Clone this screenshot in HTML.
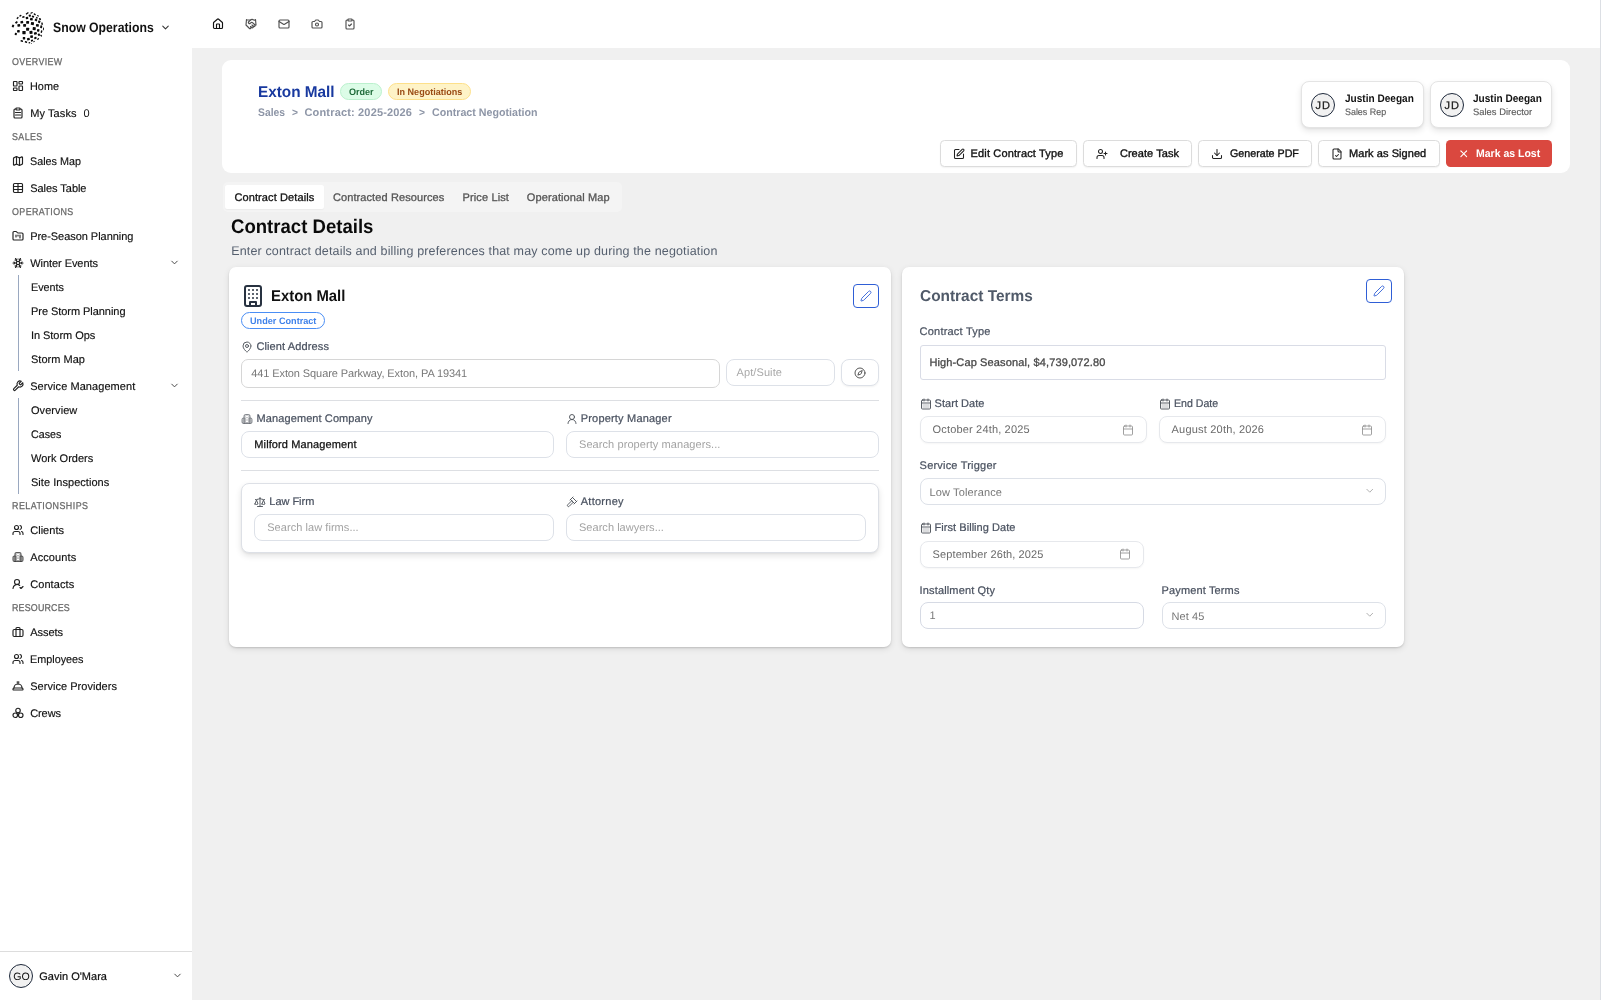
<!DOCTYPE html>
<html lang="en"><head><meta charset="utf-8"><title>Exton Mall - Contract Negotiation</title><style>
*{box-sizing:border-box;margin:0;padding:0}
html,body{width:1601px;height:1000px;overflow:hidden}
body{position:relative;background:#f0f0f0;text-rendering:geometricPrecision;font-family:"Liberation Sans",sans-serif;color:#111}
.t{position:absolute;white-space:nowrap;line-height:1}
#root{position:absolute;left:0;top:0;width:1601px;height:1000px;will-change:transform}
.b{position:absolute}
.i{position:absolute;fill:none;stroke:currentColor;stroke-linecap:round;stroke-linejoin:round;overflow:visible}
</style></head><body><div id="root">
<div class="b" style="left:0.00px;top:0.00px;width:1601.00px;height:48.00px;background:#fff"></div>
<div class="b" style="left:0.00px;top:0.00px;width:192.00px;height:1000.00px;background:#fff"></div>
<div class="b" style="left:1600.00px;top:0.00px;width:1.00px;height:1000.00px;background:#dcdfe4"></div>
<svg class="i" style="left:12px;top:12px;width:32px;height:32px" viewBox="0 0 32 32"><g fill="#0a0a0a" stroke="none"><rect x="13.70" y="0.70" width="3.00" height="1.40" rx="0.4" transform="rotate(-35 15.20 1.40)"/><rect x="18.40" y="0.24" width="2.40" height="1.28" rx="0.4" transform="rotate(-25 19.60 0.88)"/><rect x="21.62" y="1.62" width="2.20" height="1.40" rx="0.4" transform="rotate(40 22.72 2.32)"/><rect x="25.10" y="3.24" width="1.80" height="1.12" rx="0.4" transform="rotate(40 26.00 3.80)"/><rect x="7.30" y="3.10" width="2.20" height="1.40" rx="0.4" transform="rotate(-30 8.40 3.80)"/><rect x="4.50" y="5.30" width="2.20" height="1.40" rx="0.4" transform="rotate(-45 5.60 6.00)"/><rect x="10.20" y="4.16" width="2.40" height="1.68" rx="0.4" transform="rotate(-20 11.40 5.00)"/><rect x="13.76" y="4.90" width="2.48" height="2.20" rx="0.4" transform="rotate(-8 15.00 6.00)"/><rect x="16.70" y="2.60" width="2.20" height="2.00" rx="0.4" transform="rotate(-15 17.80 3.60)"/><rect x="19.90" y="3.60" width="2.20" height="2.00" rx="0.4" transform="rotate(20 21.00 4.60)"/><rect x="18.04" y="6.04" width="2.72" height="2.32" rx="0.4" transform="rotate(12 19.40 7.20)"/><rect x="22.80" y="6.90" width="2.40" height="2.20" rx="0.4" transform="rotate(30 24.00 8.00)"/><rect x="24.04" y="5.00" width="1.68" height="1.60" rx="0.4" transform="rotate(35 24.88 5.80)"/><rect x="27.20" y="6.02" width="1.60" height="2.20" rx="0.4" transform="rotate(-30 28.00 7.12)"/><rect x="3.16" y="9.50" width="2.48" height="1.80" rx="0.4" transform="rotate(-40 4.40 10.40)"/><rect x="8.44" y="9.00" width="2.72" height="2.40" rx="0.4" transform="rotate(-10 9.80 10.20)"/><rect x="14.16" y="9.04" width="2.88" height="2.72" rx="0.4" transform="rotate(0 15.60 10.40)"/><rect x="18.88" y="10.20" width="3.04" height="2.80" rx="0.4" transform="rotate(8 20.40 11.60)"/><rect x="26.10" y="8.60" width="2.20" height="2.40" rx="0.4" transform="rotate(25 27.20 9.80)"/><rect x="29.36" y="10.44" width="1.44" height="2.48" rx="0.4" transform="rotate(-8 30.08 11.68)"/><rect x="0.00" y="12.76" width="2.00" height="2.48" rx="0.4" transform="rotate(25 1.00 14.00)"/><rect x="5.44" y="12.16" width="2.72" height="2.48" rx="0.4" transform="rotate(-8 6.80 13.40)"/><rect x="11.16" y="12.04" width="2.88" height="2.72" rx="0.4" transform="rotate(0 12.60 13.40)"/><rect x="24.00" y="12.08" width="2.80" height="2.64" rx="0.4" transform="rotate(10 25.40 13.40)"/><rect x="28.24" y="13.40" width="1.92" height="2.80" rx="0.4" transform="rotate(8 29.20 14.80)"/><rect x="31.00" y="15.48" width="0.88" height="2.80" rx="0.4" transform="rotate(5 31.44 16.88)"/><rect x="14.08" y="15.76" width="3.04" height="2.88" rx="0.4" transform="rotate(0 15.60 17.20)"/><rect x="20.68" y="15.12" width="3.04" height="2.96" rx="0.4" transform="rotate(5 22.20 16.60)"/><rect x="25.04" y="17.08" width="2.32" height="2.64" rx="0.4" transform="rotate(12 26.20 18.40)"/><rect x="28.80" y="18.36" width="1.44" height="2.48" rx="0.4" transform="rotate(15 29.52 19.60)"/><rect x="5.08" y="18.00" width="2.64" height="2.40" rx="0.4" transform="rotate(0 6.40 19.20)"/><rect x="2.76" y="20.96" width="2.08" height="2.08" rx="0.4" transform="rotate(10 3.80 22.00)"/><rect x="10.36" y="19.04" width="3.28" height="3.12" rx="0.4" transform="rotate(0 12.00 20.60)"/><rect x="17.48" y="18.96" width="3.04" height="2.88" rx="0.4" transform="rotate(-5 19.00 20.40)"/><rect x="22.00" y="20.16" width="2.80" height="2.48" rx="0.4" transform="rotate(-15 23.40 21.40)"/><rect x="25.88" y="21.60" width="2.00" height="2.24" rx="0.4" transform="rotate(-30 26.88 22.72)"/><rect x="28.60" y="22.72" width="1.20" height="1.92" rx="0.4" transform="rotate(-40 29.20 23.68)"/><rect x="18.28" y="23.36" width="2.64" height="2.48" rx="0.4" transform="rotate(-10 19.60 24.60)"/><rect x="22.16" y="25.04" width="2.48" height="1.92" rx="0.4" transform="rotate(-25 23.40 26.00)"/><rect x="25.08" y="26.36" width="2.00" height="1.28" rx="0.4" transform="rotate(-40 26.08 27.00)"/><rect x="10.80" y="24.96" width="2.40" height="2.48" rx="0.4" transform="rotate(0 12.00 26.20)"/><rect x="8.56" y="28.16" width="2.48" height="1.68" rx="0.4" transform="rotate(15 9.80 29.00)"/><rect x="15.04" y="26.04" width="2.72" height="2.32" rx="0.4" transform="rotate(-15 16.40 27.20)"/><rect x="12.84" y="29.20" width="2.32" height="1.60" rx="0.4" transform="rotate(20 14.00 30.00)"/><rect x="18.96" y="27.76" width="2.08" height="1.68" rx="0.4" transform="rotate(-25 20.00 28.60)"/><rect x="16.56" y="30.16" width="1.68" height="1.28" rx="0.4" transform="rotate(-20 17.40 30.80)"/><rect x="21.20" y="29.08" width="1.60" height="1.04" rx="0.4" transform="rotate(-35 22.00 29.60)"/><rect x="18.92" y="30.96" width="0.96" height="0.88" rx="0.4" transform="rotate(0 19.40 31.40)"/></g></svg>
<span class="t" style="left:53.40px;top:21.00px;font-size:13.7px;font-weight:700;transform-origin:0 50%;transform:scaleX(0.8946);">Snow Operations</span>
<svg class="i" style="left:159.50px;top:22.00px;width:11px;height:11px;color:#333;" viewBox="0 0 24 24" stroke-width="2.3"><path d="m6 9 6 6 6-6"/></svg>
<svg class="i" style="left:212.00px;top:17.50px;width:12px;height:12px;color:#111;" viewBox="0 0 24 24" stroke-width="2.3"><path d="M15 21v-8a1 1 0 0 0-1-1h-4a1 1 0 0 0-1 1v8"/><path d="M3 10a2 2 0 0 1 .709-1.528l7-5.999a2 2 0 0 1 2.582 0l7 5.999A2 2 0 0 1 21 10v9a2 2 0 0 1-2 2H5a2 2 0 0 1-2-2z"/></svg>
<svg class="i" style="left:245.00px;top:17.50px;width:12px;height:12px;color:#505050;" viewBox="0 0 24 24" stroke-width="2.3"><path d="m11 17 2 2a1 1 0 1 0 3-3"/><path d="m14 14 2.5 2.5a1 1 0 1 0 3-3l-3.88-3.88a3 3 0 0 0-4.24 0l-.88.88a1 1 0 1 1-3-3l2.81-2.81a5.79 5.79 0 0 1 7.06-.87l.47.28a2 2 0 0 0 1.42.25L21 4"/><path d="m21 3 1 11h-2"/><path d="M3 3 2 14l6.5 6.5a1 1 0 1 0 3-3"/><path d="M3 4h8"/></svg>
<svg class="i" style="left:278.00px;top:17.50px;width:12px;height:12px;color:#505050;" viewBox="0 0 24 24" stroke-width="2.3"><rect width="20" height="16" x="2" y="4" rx="2"/><path d="m22 7-8.97 5.7a1.94 1.94 0 0 1-2.06 0L2 7"/></svg>
<svg class="i" style="left:311.00px;top:17.50px;width:12px;height:12px;color:#505050;" viewBox="0 0 24 24" stroke-width="2.3"><path d="M14.5 4h-5L7 7H4a2 2 0 0 0-2 2v9a2 2 0 0 0 2 2h16a2 2 0 0 0 2-2V9a2 2 0 0 0-2-2h-3l-2.5-3z"/><circle cx="12" cy="13" r="3"/></svg>
<svg class="i" style="left:344.00px;top:17.50px;width:12px;height:12px;color:#505050;" viewBox="0 0 24 24" stroke-width="2.3"><rect width="8" height="4" x="8" y="2" rx="1" ry="1"/><path d="M16 4h2a2 2 0 0 1 2 2v14a2 2 0 0 1-2 2H6a2 2 0 0 1-2-2V6a2 2 0 0 1 2-2h2"/><path d="m9 14 2 2 4-4"/></svg>
<span class="t" style="left:12.00px;top:58.40px;font-size:9.9px;color:#666;transform-origin:0 50%;transform:scaleX(0.9);letter-spacing:0.390px;-webkit-text-stroke:0.25px;">OVERVIEW</span>
<svg class="i" style="left:12.00px;top:80.00px;width:12px;height:12px;color:#222;" viewBox="0 0 24 24" stroke-width="2.3"><rect width="7" height="9" x="3" y="3" rx="1"/><rect width="7" height="5" x="14" y="3" rx="1"/><rect width="7" height="9" x="14" y="12" rx="1"/><rect width="7" height="5" x="3" y="16" rx="1"/></svg>
<span class="t" style="left:30.20px;top:81.90px;font-size:11px;transform-origin:0 50%;transform:scaleX(0.9883);-webkit-text-stroke:0.15px;">Home</span>
<svg class="i" style="left:12.00px;top:107.00px;width:12px;height:12px;color:#222;" viewBox="0 0 24 24" stroke-width="2.3"><rect width="8" height="4" x="8" y="2" rx="1" ry="1"/><path d="M16 4h2a2 2 0 0 1 2 2v14a2 2 0 0 1-2 2H6a2 2 0 0 1-2-2V6a2 2 0 0 1 2-2h2"/><path d="M7 11h10"/><path d="M7 16h10"/></svg>
<span class="t" style="left:30.20px;top:108.90px;font-size:11px;letter-spacing:0.094px;-webkit-text-stroke:0.15px;">My Tasks</span>
<span class="t" style="left:83.50px;top:108.90px;font-size:11px;">0</span>
<span class="t" style="left:12.00px;top:133.40px;font-size:9.9px;color:#666;transform-origin:0 50%;transform:scaleX(0.9);letter-spacing:0.428px;-webkit-text-stroke:0.25px;">SALES</span>
<svg class="i" style="left:12.00px;top:155.00px;width:12px;height:12px;color:#222;" viewBox="0 0 24 24" stroke-width="2.3"><path d="M14.106 5.553a2 2 0 0 0 1.788 0l3.659-1.83A1 1 0 0 1 21 4.619v12.764a1 1 0 0 1-.553.894l-4.553 2.277a2 2 0 0 1-1.788 0l-4.212-2.106a2 2 0 0 0-1.788 0l-3.659 1.83A1 1 0 0 1 3 19.381V6.618a1 1 0 0 1 .553-.894l4.553-2.277a2 2 0 0 1 1.788 0z"/><path d="M15 5.764v15"/><path d="M9 3.236v15"/></svg>
<span class="t" style="left:30.20px;top:156.90px;font-size:11px;transform-origin:0 50%;transform:scaleX(0.9811);-webkit-text-stroke:0.15px;">Sales Map</span>
<svg class="i" style="left:12.00px;top:182.00px;width:12px;height:12px;color:#222;" viewBox="0 0 24 24" stroke-width="2.3"><path d="M12 3v18"/><rect width="18" height="18" x="3" y="3" rx="2"/><path d="M3 9h18"/><path d="M3 15h18"/></svg>
<span class="t" style="left:30.20px;top:183.90px;font-size:11px;letter-spacing:-0.037px;-webkit-text-stroke:0.15px;">Sales Table</span>
<span class="t" style="left:12.00px;top:208.40px;font-size:9.9px;color:#666;transform-origin:0 50%;transform:scaleX(0.9);letter-spacing:0.443px;-webkit-text-stroke:0.25px;">OPERATIONS</span>
<svg class="i" style="left:12.00px;top:230.00px;width:12px;height:12px;color:#222;" viewBox="0 0 24 24" stroke-width="2.3"><path d="M4 20h16a2 2 0 0 0 2-2V8a2 2 0 0 0-2-2h-7.930a2 2 0 0 1-1.660-.900l-.820-1.200A2 2 0 0 0 7.930 3H4a2 2 0 0 0-2 2v13c0 1.100.900 2 2 2Z"/><path d="M8 10v4"/><path d="M12 10v2"/><path d="M16 10v6"/></svg>
<span class="t" style="left:30.20px;top:231.90px;font-size:11px;letter-spacing:-0.043px;-webkit-text-stroke:0.15px;">Pre-Season Planning</span>
<svg class="i" style="left:12.00px;top:257.00px;width:12px;height:12px;color:#222;" viewBox="0 0 24 24" stroke-width="2.3"><path d="m10 20-1.25-2.5L6 18"/><path d="M10 4 8.75 6.5 6 6"/><path d="m14 20 1.25-2.5L18 18"/><path d="m14 4 1.25 2.5L18 6"/><path d="m17 21-3-6h-4"/><path d="m17 3-3 6 1.500 3"/><path d="M2 12h6.500L10 9"/><path d="m20 10-1.500 2 1.500 2"/><path d="M22 12h-6.500L14 15"/><path d="m4 10 1.500 2L4 14"/><path d="m7 21 3-6-1.500-3"/><path d="m7 3 3 6h4"/></svg>
<span class="t" style="left:30.20px;top:258.90px;font-size:11px;letter-spacing:-0.056px;-webkit-text-stroke:0.15px;">Winter Events</span>
<svg class="i" style="left:168.50px;top:257.10px;width:11px;height:11px;color:#444;" viewBox="0 0 24 24" stroke-width="2.1"><path d="m6 9 6 6 6-6"/></svg>
<span class="t" style="left:31.00px;top:282.90px;font-size:11px;transform-origin:0 50%;transform:scaleX(0.9810);-webkit-text-stroke:0.15px;">Events</span>
<span class="t" style="left:31.00px;top:306.90px;font-size:11px;letter-spacing:-0.052px;-webkit-text-stroke:0.15px;">Pre Storm Planning</span>
<span class="t" style="left:31.00px;top:330.90px;font-size:11px;letter-spacing:-0.054px;-webkit-text-stroke:0.15px;">In Storm Ops</span>
<span class="t" style="left:31.00px;top:354.90px;font-size:11px;letter-spacing:0.025px;-webkit-text-stroke:0.15px;">Storm Map</span>
<svg class="i" style="left:12.00px;top:380.00px;width:12px;height:12px;color:#222;" viewBox="0 0 24 24" stroke-width="2.3"><path d="M14.7 6.3a1 1 0 0 0 0 1.400l1.600 1.600a1 1 0 0 0 1.400 0l3.770-3.770a6 6 0 0 1-7.940 7.940l-6.910 6.910a2.120 2.120 0 0 1-3-3l6.910-6.910a6 6 0 0 1 7.940-7.940l-3.760 3.760z"/></svg>
<span class="t" style="left:30.20px;top:381.90px;font-size:11px;letter-spacing:0.067px;-webkit-text-stroke:0.15px;">Service Management</span>
<svg class="i" style="left:168.50px;top:380.30px;width:11px;height:11px;color:#444;" viewBox="0 0 24 24" stroke-width="2.1"><path d="m6 9 6 6 6-6"/></svg>
<span class="t" style="left:31.00px;top:405.90px;font-size:11px;letter-spacing:0.065px;-webkit-text-stroke:0.15px;">Overview</span>
<span class="t" style="left:31.00px;top:429.90px;font-size:11px;transform-origin:0 50%;transform:scaleX(0.9715);-webkit-text-stroke:0.15px;">Cases</span>
<span class="t" style="left:31.00px;top:453.90px;font-size:11px;letter-spacing:0.016px;-webkit-text-stroke:0.15px;">Work Orders</span>
<span class="t" style="left:31.00px;top:477.90px;font-size:11px;letter-spacing:0.036px;-webkit-text-stroke:0.15px;">Site Inspections</span>
<div class="b" style="left:18.00px;top:275.00px;width:1.00px;height:96.00px;background:#9aa8c0"></div>
<div class="b" style="left:18.00px;top:398.00px;width:1.00px;height:96.00px;background:#9aa8c0"></div>
<span class="t" style="left:12.00px;top:502.40px;font-size:9.9px;color:#666;transform-origin:0 50%;transform:scaleX(0.9);letter-spacing:0.512px;-webkit-text-stroke:0.25px;">RELATIONSHIPS</span>
<svg class="i" style="left:12.00px;top:524.00px;width:12px;height:12px;color:#222;" viewBox="0 0 24 24" stroke-width="2.3"><path d="M16 21v-2a4 4 0 0 0-4-4H6a4 4 0 0 0-4 4v2"/><circle cx="9" cy="7" r="4"/><path d="M22 21v-2a4 4 0 0 0-3-3.870"/><path d="M16 3.130a4 4 0 0 1 0 7.750"/></svg>
<span class="t" style="left:30.20px;top:525.90px;font-size:11px;letter-spacing:0.029px;-webkit-text-stroke:0.15px;">Clients</span>
<svg class="i" style="left:12.00px;top:551.00px;width:12px;height:12px;color:#222;" viewBox="0 0 24 24" stroke-width="2.3"><g stroke-opacity=".7"><path d="M6 21V6a3 3 0 0 1 3-3h6a3 3 0 0 1 3 3v15" fill="currentColor" fill-opacity=".25"/><path d="M6 10H5a3 3 0 0 0-3 3v5a3 3 0 0 0 3 3h14a3 3 0 0 0 3-3v-5a3 3 0 0 0-3-3h-1" fill="currentColor" fill-opacity=".25"/></g><rect x="9.800" y="6" width="4.400" height="12" fill="#fff" stroke="none"/><path d="M12 9.500v.010"/><path d="M12 14v.010"/></svg>
<span class="t" style="left:30.20px;top:552.90px;font-size:11px;letter-spacing:0.107px;-webkit-text-stroke:0.15px;">Accounts</span>
<svg class="i" style="left:12.00px;top:578.00px;width:12px;height:12px;color:#222;" viewBox="0 0 24 24" stroke-width="2.3"><path d="M2 21a8 8 0 0 1 13.292-6"/><circle cx="10" cy="8" r="5"/><path d="m16 19 2 2 4-4"/></svg>
<span class="t" style="left:30.20px;top:579.90px;font-size:11px;letter-spacing:0.083px;-webkit-text-stroke:0.15px;">Contacts</span>
<span class="t" style="left:12.00px;top:604.40px;font-size:9.9px;color:#666;transform-origin:0 50%;transform:scaleX(0.9);letter-spacing:0.194px;-webkit-text-stroke:0.25px;">RESOURCES</span>
<svg class="i" style="left:12.00px;top:626.00px;width:12px;height:12px;color:#222;" viewBox="0 0 24 24" stroke-width="2.3"><rect x="2" y="7" width="20" height="14" rx="2.500"/><path d="M8 7V5a2 2 0 0 1 2-2h4a2 2 0 0 1 2 2v2"/><path d="M8 7v14"/><path d="M16 7v14"/></svg>
<span class="t" style="left:30.20px;top:627.90px;font-size:11px;letter-spacing:-0.043px;-webkit-text-stroke:0.15px;">Assets</span>
<svg class="i" style="left:12.00px;top:653.00px;width:12px;height:12px;color:#222;" viewBox="0 0 24 24" stroke-width="2.3"><path d="M16 21v-2a4 4 0 0 0-4-4H6a4 4 0 0 0-4 4v2"/><circle cx="9" cy="7" r="4"/><path d="M22 21v-2a4 4 0 0 0-3-3.870"/><path d="M16 3.130a4 4 0 0 1 0 7.750"/></svg>
<span class="t" style="left:30.20px;top:654.90px;font-size:11px;transform-origin:0 50%;transform:scaleX(0.9831);-webkit-text-stroke:0.15px;">Employees</span>
<svg class="i" style="left:12.00px;top:680.00px;width:12px;height:12px;color:#222;" viewBox="0 0 24 24" stroke-width="2.3"><path d="M3 20a1 1 0 0 1-1-1v-1a2 2 0 0 1 2-2h16a2 2 0 0 1 2 2v1a1 1 0 0 1-1 1Z"/><path d="M20 16a8 8 0 1 0-16 0"/><path d="M12 4v4"/><path d="M10 4h4"/></svg>
<span class="t" style="left:30.20px;top:681.90px;font-size:11px;letter-spacing:0.037px;-webkit-text-stroke:0.15px;">Service Providers</span>
<svg class="i" style="left:12.00px;top:707.00px;width:12px;height:12px;color:#222;" viewBox="0 0 24 24" stroke-width="2.3"><circle cx="12" cy="7" r="4.500"/><circle cx="6.500" cy="16.500" r="4.500"/><circle cx="17.500" cy="16.500" r="4.500"/><path d="M12 11.500v3"/></svg>
<span class="t" style="left:30.20px;top:708.90px;font-size:11px;letter-spacing:-0.093px;-webkit-text-stroke:0.15px;">Crews</span>
<div class="b" style="left:0.00px;top:951.00px;width:192.00px;height:1.00px;background:#ddd"></div>
<div class="b" style="left:9.00px;top:964.00px;width:24.00px;height:24.00px;border:1px solid #1e293b;border-radius:50%;background:#f1f1f1"></div>
<span class="t" style="left:13.20px;top:972.00px;font-size:10.6px;">GO</span>
<span class="t" style="left:39.20px;top:972.00px;font-size:11px;letter-spacing:0.026px;-webkit-text-stroke:0.2px;">Gavin O'Mara</span>
<svg class="i" style="left:171.50px;top:970.30px;width:11px;height:11px;color:#444;" viewBox="0 0 24 24" stroke-width="2.1"><path d="m6 9 6 6 6-6"/></svg>
<div class="b" style="left:222.00px;top:60.00px;width:1348.00px;height:113.00px;background:#fff;border-radius:9px"></div>
<span class="t" style="left:258.10px;top:84.80px;font-size:15.7px;font-weight:700;color:#18399f;transform-origin:0 50%;transform:scaleX(0.9764);">Exton Mall</span>
<div class="b" style="left:340.00px;top:83.00px;width:42.00px;height:17.00px;background:#dcfce7;border:1px solid #bbf0cd;border-radius:9px"></div>
<span class="t" style="left:348.60px;top:86.60px;font-size:9.4px;font-weight:700;color:#1f6b3a;transform-origin:0 50%;transform:scaleX(0.9635);">Order</span>
<div class="b" style="left:388.00px;top:83.00px;width:83.00px;height:17.00px;background:#fef3c7;border:1px solid #fde08a;border-radius:9px"></div>
<span class="t" style="left:396.60px;top:86.60px;font-size:9.4px;font-weight:700;color:#9a4a14;transform-origin:0 50%;transform:scaleX(0.9658);">In Negotiations</span>
<span class="t" style="left:258.10px;top:108.10px;font-size:11px;font-weight:700;color:#8e96a7;transform-origin:0 50%;transform:scaleX(0.9391);">Sales</span>
<span class="t" style="left:291.80px;top:108.10px;font-size:11px;font-weight:700;color:#8e96a7;transform-origin:0 50%;transform:scaleX(0.9320);">&gt;</span>
<span class="t" style="left:304.50px;top:108.10px;font-size:11px;font-weight:700;color:#8e96a7;letter-spacing:0.163px;">Contract: 2025-2026</span>
<span class="t" style="left:418.60px;top:108.10px;font-size:11px;font-weight:700;color:#8e96a7;transform-origin:0 50%;transform:scaleX(0.9320);">&gt;</span>
<span class="t" style="left:431.50px;top:108.10px;font-size:11px;font-weight:700;color:#8e96a7;transform-origin:0 50%;transform:scaleX(0.9698);">Contract Negotiation</span>
<div class="b" style="left:1301.00px;top:81.00px;width:123.00px;height:47.00px;background:#fff;border:1px solid #e4e4e4;border-radius:8px;box-shadow:0 3px 6px rgba(0,0,0,.10),0 1px 2px rgba(0,0,0,.05)"></div>
<div class="b" style="left:1311.00px;top:93.00px;width:24.00px;height:24.00px;border:1px solid #1e293b;border-radius:50%;background:#f1f1f1"></div>
<span class="t" style="left:1315.50px;top:101.00px;font-size:11px;color:#1a1a1a;letter-spacing:0.947px;-webkit-text-stroke:0.25px;">JD</span>
<span class="t" style="left:1344.60px;top:94.00px;font-size:11px;font-weight:700;transform-origin:0 50%;transform:scaleX(0.9150);">Justin Deegan</span>
<span class="t" style="left:1344.60px;top:107.00px;font-size:9.4px;color:#5c5c5c;transform-origin:0 50%;transform:scaleX(0.9499);-webkit-text-stroke:0.15px;">Sales Rep</span>
<div class="b" style="left:1430.00px;top:81.00px;width:122.00px;height:47.00px;background:#fff;border:1px solid #e4e4e4;border-radius:8px;box-shadow:0 3px 6px rgba(0,0,0,.10),0 1px 2px rgba(0,0,0,.05)"></div>
<div class="b" style="left:1440.00px;top:93.00px;width:24.00px;height:24.00px;border:1px solid #1e293b;border-radius:50%;background:#f1f1f1"></div>
<span class="t" style="left:1444.50px;top:101.00px;font-size:11px;color:#1a1a1a;letter-spacing:0.947px;-webkit-text-stroke:0.25px;">JD</span>
<span class="t" style="left:1472.90px;top:94.00px;font-size:11px;font-weight:700;transform-origin:0 50%;transform:scaleX(0.9150);">Justin Deegan</span>
<span class="t" style="left:1472.90px;top:107.00px;font-size:9.4px;color:#5c5c5c;letter-spacing:0.033px;-webkit-text-stroke:0.15px;">Sales Director</span>
<div class="b" style="left:940.00px;top:140.00px;width:137.00px;height:27.00px;background:#fff;border:1px solid #dcdcdc;border-radius:4.5px;box-shadow:0 1px 1.5px rgba(0,0,0,.05)"></div>
<svg class="i" style="left:953.00px;top:147.70px;width:12px;height:12px;color:#222;" viewBox="0 0 24 24" stroke-width="2.1"><path d="M12 3H5a2 2 0 0 0-2 2v14a2 2 0 0 0 2 2h14a2 2 0 0 0 2-2v-7"/><path d="M18.375 2.625a1 1 0 0 1 3 3l-9.013 9.014a2 2 0 0 1-.853.505l-2.873.840a.5.5 0 0 1-.620-.620l.840-2.873a2 2 0 0 1 .506-.852z"/></svg>
<span class="t" style="left:970.60px;top:149.40px;font-size:11px;letter-spacing:0.141px;-webkit-text-stroke:0.35px;">Edit Contract Type</span>
<div class="b" style="left:1083.00px;top:140.00px;width:109.00px;height:27.00px;background:#fff;border:1px solid #dcdcdc;border-radius:4.5px;box-shadow:0 1px 1.5px rgba(0,0,0,.05)"></div>
<svg class="i" style="left:1096.00px;top:147.70px;width:12px;height:12px;color:#222;" viewBox="0 0 24 24" stroke-width="2.1"><path d="M16 21v-2a4 4 0 0 0-4-4H6a4 4 0 0 0-4 4v2"/><circle cx="9" cy="7" r="4"/><path d="M19 8v6"/><path d="M22 11h-6"/></svg>
<span class="t" style="left:1119.90px;top:149.40px;font-size:11px;letter-spacing:0.060px;-webkit-text-stroke:0.35px;">Create Task</span>
<div class="b" style="left:1198.00px;top:140.00px;width:114.00px;height:27.00px;background:#fff;border:1px solid #dcdcdc;border-radius:4.5px;box-shadow:0 1px 1.5px rgba(0,0,0,.05)"></div>
<svg class="i" style="left:1211.00px;top:147.70px;width:12px;height:12px;color:#222;" viewBox="0 0 24 24" stroke-width="2.1"><path d="M21 15v4a2 2 0 0 1-2 2H5a2 2 0 0 1-2-2v-4"/><path d="M7 10l5 5 5-5"/><path d="M12 15V3"/></svg>
<span class="t" style="left:1229.70px;top:149.40px;font-size:11px;transform-origin:0 50%;transform:scaleX(0.9715);-webkit-text-stroke:0.35px;">Generate PDF</span>
<div class="b" style="left:1318.00px;top:140.00px;width:122.00px;height:27.00px;background:#fff;border:1px solid #dcdcdc;border-radius:4.5px;box-shadow:0 1px 1.5px rgba(0,0,0,.05)"></div>
<svg class="i" style="left:1331.00px;top:147.70px;width:12px;height:12px;color:#222;" viewBox="0 0 24 24" stroke-width="2.1"><path d="M15 2H6a2 2 0 0 0-2 2v16a2 2 0 0 0 2 2h12a2 2 0 0 0 2-2V7Z"/><path d="M14 2v4a2 2 0 0 0 2 2h4"/><path d="m9 15 2 2 4-4"/></svg>
<span class="t" style="left:1349.00px;top:149.40px;font-size:11px;letter-spacing:0.059px;-webkit-text-stroke:0.35px;">Mark as Signed</span>
<div class="b" style="left:1446.00px;top:140.00px;width:106.00px;height:27.00px;background:#da483f;border-radius:4.5px"></div>
<svg class="i" style="left:1458.05px;top:147.95px;width:11.5px;height:11.5px;color:#fff;" viewBox="0 0 24 24" stroke-width="2.1"><path d="M18 6 6 18"/><path d="m6 6 12 12"/></svg>
<span class="t" style="left:1475.90px;top:149.40px;font-size:11px;font-weight:700;color:#fff;transform-origin:0 50%;transform:scaleX(0.9546);">Mark as Lost</span>
<div class="b" style="left:223.00px;top:182.00px;width:399.00px;height:30.00px;background:#f4f4f4;border-radius:5px"></div>
<div class="b" style="left:225.00px;top:185.00px;width:99.00px;height:24.00px;background:#fff;border-radius:2.5px;box-shadow:0 1px 1.5px rgba(0,0,0,.04)"></div>
<span class="t" style="left:234.40px;top:193.00px;font-size:11px;letter-spacing:0.109px;-webkit-text-stroke:0.3px;">Contract Details</span>
<span class="t" style="left:332.90px;top:193.00px;font-size:11px;color:#555;letter-spacing:0.102px;-webkit-text-stroke:0.3px;">Contracted Resources</span>
<span class="t" style="left:462.50px;top:193.00px;font-size:11px;color:#555;letter-spacing:0.128px;-webkit-text-stroke:0.3px;">Price List</span>
<span class="t" style="left:526.80px;top:193.00px;font-size:11px;color:#555;letter-spacing:0.105px;-webkit-text-stroke:0.3px;">Operational Map</span>
<span class="t" style="left:231.20px;top:218.00px;font-size:19.6px;font-weight:700;color:#0a0a0a;transform-origin:0 50%;transform:scaleX(0.9477);">Contract Details</span>
<span class="t" style="left:231.20px;top:244.90px;font-size:12.5px;color:#555f6e;letter-spacing:0.153px;">Enter contract details and billing preferences that may come up during the negotiation</span>
<div class="b" style="left:229.00px;top:267.00px;width:662.00px;height:380.00px;background:#fff;border-radius:7px;box-shadow:0 1px 2px rgba(0,0,0,.15),0 2px 6px rgba(0,0,0,.10)"></div>
<svg class="i" style="left:241.00px;top:284.00px;width:24px;height:24px;color:#283241;" viewBox="0 0 24 24" stroke-width="2"><rect width="16" height="20" x="4" y="2" rx="2" ry="2"/><path d="M9 22v-4h6v4"/><path d="M8 6h.01"/><path d="M16 6h.01"/><path d="M12 6h.01"/><path d="M12 10h.01"/><path d="M12 14h.01"/><path d="M16 10h.01"/><path d="M16 14h.01"/><path d="M8 10h.01"/><path d="M8 14h.01"/></svg>
<span class="t" style="left:271.40px;top:289.00px;font-size:15.7px;font-weight:700;transform-origin:0 50%;transform:scaleX(0.9483);">Exton Mall</span>
<div class="b" style="left:853.00px;top:284.00px;width:26.00px;height:24.00px;border:1px solid #2f5fd6;border-radius:4px;background:#fff"></div>
<svg class="i" style="left:860.00px;top:290.00px;width:12px;height:12px;color:#2f5fd6;" viewBox="0 0 24 24" stroke-width="1.8"><path d="M21.174 6.812a1 1 0 0 0-3.986-3.987L3.842 16.174a2 2 0 0 0-.5.830l-1.321 4.352a.5.5 0 0 0 .623.622l4.353-1.320a2 2 0 0 0 .830-.497z"/></svg>
<div class="b" style="left:241.00px;top:312.00px;width:84.00px;height:17.00px;border:1px solid #4a8ef5;border-radius:9px;background:#fff"></div>
<span class="t" style="left:249.60px;top:316.00px;font-size:9.4px;font-weight:700;color:#3f82ea;transform-origin:0 50%;transform:scaleX(0.9731);">Under Contract</span>
<svg class="i" style="left:241.00px;top:340.60px;width:12px;height:12px;color:#50555d;" viewBox="0 0 24 24" stroke-width="1.9"><path d="M20 10c0 4.993-5.539 10.193-7.399 11.799a1 1 0 0 1-1.202 0C9.539 20.193 4 14.993 4 10a8 8 0 0 1 16 0"/><circle cx="12" cy="10" r="3"/></svg>
<span class="t" style="left:256.40px;top:342.00px;font-size:11px;color:#4a5260;letter-spacing:0.128px;-webkit-text-stroke:0.22px;">Client Address</span>
<div class="b" style="left:241.00px;top:359.00px;width:479.00px;height:29.00px;background:#fff;border:1px solid #d6d6d6;border-radius:7px"></div>
<span class="t" style="left:251.20px;top:369.00px;font-size:11px;color:#777;letter-spacing:-0.093px;">441 Exton Square Parkway, Exton, PA 19341</span>
<div class="b" style="left:726.00px;top:359.00px;width:109.00px;height:27.00px;background:#fff;border:1px solid #dde1e8;border-radius:8px"></div>
<span class="t" style="left:736.60px;top:368.00px;font-size:11px;color:#a8a8a8;letter-spacing:0.082px;">Apt/Suite</span>
<div class="b" style="left:841.00px;top:359.00px;width:38.00px;height:27.00px;background:#fff;border:1px solid #dde1e8;border-radius:8px;box-shadow:0 1px 2px rgba(0,0,0,.06)"></div>
<svg class="i" style="left:854.00px;top:366.90px;width:12px;height:12px;color:#444;" viewBox="0 0 24 24" stroke-width="1.8"><circle cx="12" cy="12" r="10"/><path d="m16.240 7.760-1.804 5.411a2 2 0 0 1-1.265 1.265L7.760 16.240l1.804-5.411a2 2 0 0 1 1.265-1.265z"/></svg>
<div class="b" style="left:241.00px;top:400.00px;width:638.00px;height:1.00px;background:#dddfe3"></div>
<svg class="i" style="left:241.00px;top:412.60px;width:12px;height:12px;color:#50555d;" viewBox="0 0 24 24" stroke-width="1.9"><g stroke-opacity=".7"><path d="M6 21V6a3 3 0 0 1 3-3h6a3 3 0 0 1 3 3v15" fill="currentColor" fill-opacity=".25"/><path d="M6 10H5a3 3 0 0 0-3 3v5a3 3 0 0 0 3 3h14a3 3 0 0 0 3-3v-5a3 3 0 0 0-3-3h-1" fill="currentColor" fill-opacity=".25"/></g><rect x="9.800" y="6" width="4.400" height="12" fill="#fff" stroke="none"/><path d="M12 9.500v.010"/><path d="M12 14v.010"/></svg>
<span class="t" style="left:256.60px;top:414.00px;font-size:11px;color:#4a5260;letter-spacing:0.092px;-webkit-text-stroke:0.22px;">Management Company</span>
<svg class="i" style="left:566.00px;top:412.60px;width:12px;height:12px;color:#50555d;" viewBox="0 0 24 24" stroke-width="1.9"><circle cx="12" cy="8" r="5"/><path d="M20 21a8 8 0 0 0-16 0"/></svg>
<span class="t" style="left:580.70px;top:414.00px;font-size:11px;color:#4a5260;letter-spacing:0.190px;-webkit-text-stroke:0.22px;">Property Manager</span>
<div class="b" style="left:241.00px;top:431.00px;width:313.00px;height:27.00px;background:#fff;border:1px solid #dde1e8;border-radius:8px"></div>
<span class="t" style="left:254.30px;top:440.00px;font-size:11px;letter-spacing:0.113px;-webkit-text-stroke:0.25px;">Milford Management</span>
<div class="b" style="left:566.00px;top:431.00px;width:313.00px;height:27.00px;background:#fff;border:1px solid #dde1e8;border-radius:8px"></div>
<span class="t" style="left:579.00px;top:440.00px;font-size:11px;color:#a3a3a3;letter-spacing:0.077px;">Search property managers...</span>
<div class="b" style="left:241.00px;top:470.00px;width:638.00px;height:1.00px;background:#dddfe3"></div>
<div class="b" style="left:241.00px;top:483.00px;width:638.00px;height:70.00px;background:#fff;border:1px solid #dde0e6;border-radius:8px;box-shadow:0 3px 6px rgba(0,0,0,.11),0 1px 2px rgba(0,0,0,.05)"></div>
<svg class="i" style="left:253.80px;top:495.60px;width:12px;height:12px;color:#50555d;" viewBox="0 0 24 24" stroke-width="1.9"><path d="m16 16 3-8 3 8c-.870.650-1.920 1-3 1s-2.130-.350-3-1Z"/><path d="m2 16 3-8 3 8c-.870.650-1.920 1-3 1s-2.130-.350-3-1Z"/><path d="M7 21h10"/><path d="M12 3v18"/><path d="M3 7h2c2 0 5-1 7-2 2 1 5 2 7 2h2"/></svg>
<span class="t" style="left:269.30px;top:497.00px;font-size:11px;color:#4a5260;letter-spacing:-0.033px;-webkit-text-stroke:0.22px;">Law Firm</span>
<svg class="i" style="left:566.00px;top:495.60px;width:12px;height:12px;color:#50555d;" viewBox="0 0 24 24" stroke-width="1.9"><path d="m14.500 12.500-8 8a2.119 2.119 0 1 1-3-3l8-8"/><path d="m16 16 6-6"/><path d="m8 8 6-6"/><path d="m9 7 8 8"/><path d="m21 11-8-8"/></svg>
<span class="t" style="left:580.70px;top:497.00px;font-size:11px;color:#4a5260;letter-spacing:0.276px;-webkit-text-stroke:0.22px;">Attorney</span>
<div class="b" style="left:254.00px;top:514.00px;width:300.00px;height:27.00px;background:#fff;border:1px solid #dde1e8;border-radius:8px"></div>
<span class="t" style="left:267.20px;top:523.00px;font-size:11px;color:#a3a3a3;letter-spacing:0.057px;">Search law firms...</span>
<div class="b" style="left:566.00px;top:514.00px;width:300.00px;height:27.00px;background:#fff;border:1px solid #dde1e8;border-radius:8px"></div>
<span class="t" style="left:579.00px;top:523.00px;font-size:11px;color:#a3a3a3;letter-spacing:0.033px;">Search lawyers...</span>
<div class="b" style="left:902.00px;top:267.00px;width:502.00px;height:380.00px;background:#fff;border-radius:7px;box-shadow:0 1px 2px rgba(0,0,0,.15),0 2px 6px rgba(0,0,0,.10)"></div>
<span class="t" style="left:919.80px;top:289.00px;font-size:15.7px;font-weight:700;color:#505a69;transform-origin:0 50%;transform:scaleX(0.9827);">Contract Terms</span>
<div class="b" style="left:1366.00px;top:279.00px;width:26.00px;height:24.00px;border:1px solid #2f5fd6;border-radius:4px;background:#fff"></div>
<svg class="i" style="left:1373.00px;top:285.00px;width:12px;height:12px;color:#2f5fd6;" viewBox="0 0 24 24" stroke-width="1.8"><path d="M21.174 6.812a1 1 0 0 0-3.986-3.987L3.842 16.174a2 2 0 0 0-.5.830l-1.321 4.352a.5.5 0 0 0 .623.622l4.353-1.320a2 2 0 0 0 .830-.497z"/></svg>
<span class="t" style="left:919.60px;top:327.00px;font-size:11px;color:#4a5260;letter-spacing:0.210px;-webkit-text-stroke:0.22px;">Contract Type</span>
<div class="b" style="left:920.00px;top:345.00px;width:466.00px;height:35.00px;background:#fff;border:1px solid #d9dce6;border-radius:3px"></div>
<span class="t" style="left:929.40px;top:358.00px;font-size:11px;color:#484848;letter-spacing:0.134px;-webkit-text-stroke:0.3px;">High-Cap Seasonal, $4,739,072.80</span>
<svg class="i" style="left:920.00px;top:397.60px;width:12px;height:12px;color:#50555d;" viewBox="0 0 24 24" stroke-width="1.9"><path d="M8 2v4"/><path d="M16 2v4"/><rect width="18" height="18" x="3" y="4" rx="2"/><path d="M3 10h18"/><rect x="5" y="12" width="14" height="8" fill="currentColor" fill-opacity=".2" stroke="none"/></svg>
<span class="t" style="left:934.60px;top:399.00px;font-size:11px;color:#4a5260;letter-spacing:0.030px;-webkit-text-stroke:0.22px;">Start Date</span>
<svg class="i" style="left:1159.00px;top:397.60px;width:12px;height:12px;color:#50555d;" viewBox="0 0 24 24" stroke-width="1.9"><path d="M8 2v4"/><path d="M16 2v4"/><rect width="18" height="18" x="3" y="4" rx="2"/><path d="M3 10h18"/><rect x="5" y="12" width="14" height="8" fill="currentColor" fill-opacity=".2" stroke="none"/></svg>
<span class="t" style="left:1173.80px;top:399.00px;font-size:11px;color:#4a5260;transform-origin:0 50%;transform:scaleX(0.9635);-webkit-text-stroke:0.22px;">End Date</span>
<div class="b" style="left:920.00px;top:416.00px;width:227.00px;height:27.00px;background:#fff;border:1px solid #e6e8ec;border-radius:8px;box-shadow:0 1px 2px rgba(0,0,0,.04)"></div>
<span class="t" style="left:932.60px;top:425.00px;font-size:11px;color:#6b6b6b;letter-spacing:0.165px;">October 24th, 2025</span>
<svg class="i" style="left:1122.00px;top:424.00px;width:12px;height:12px;color:#909090;" viewBox="0 0 24 24" stroke-width="1.7"><path d="M8 2v4"/><path d="M16 2v4"/><rect width="18" height="18" x="3" y="4" rx="2"/><path d="M3 10h18"/></svg>
<div class="b" style="left:1159.00px;top:416.00px;width:227.00px;height:27.00px;background:#fff;border:1px solid #e6e8ec;border-radius:8px;box-shadow:0 1px 2px rgba(0,0,0,.04)"></div>
<span class="t" style="left:1171.60px;top:425.00px;font-size:11px;color:#6b6b6b;letter-spacing:0.194px;">August 20th, 2026</span>
<svg class="i" style="left:1361.00px;top:424.00px;width:12px;height:12px;color:#909090;" viewBox="0 0 24 24" stroke-width="1.7"><path d="M8 2v4"/><path d="M16 2v4"/><rect width="18" height="18" x="3" y="4" rx="2"/><path d="M3 10h18"/></svg>
<span class="t" style="left:919.60px;top:461.00px;font-size:11px;color:#4a5260;letter-spacing:0.201px;-webkit-text-stroke:0.22px;">Service Trigger</span>
<div class="b" style="left:920.00px;top:478.00px;width:466.00px;height:27.00px;background:#fff;border:1px solid #dde1e8;border-radius:8px"></div>
<span class="t" style="left:929.40px;top:488.00px;font-size:11px;color:#777;letter-spacing:0.155px;">Low Tolerance</span>
<svg class="i" style="left:1364.25px;top:485.25px;width:11.5px;height:11.5px;color:#a8a8a8;" viewBox="0 0 24 24" stroke-width="1.9"><path d="m6 9 6 6 6-6"/></svg>
<svg class="i" style="left:920.00px;top:521.60px;width:12px;height:12px;color:#50555d;" viewBox="0 0 24 24" stroke-width="1.9"><path d="M8 2v4"/><path d="M16 2v4"/><rect width="18" height="18" x="3" y="4" rx="2"/><path d="M3 10h18"/><rect x="5" y="12" width="14" height="8" fill="currentColor" fill-opacity=".2" stroke="none"/></svg>
<span class="t" style="left:934.60px;top:523.00px;font-size:11px;color:#4a5260;letter-spacing:0.042px;-webkit-text-stroke:0.22px;">First Billing Date</span>
<div class="b" style="left:920.00px;top:541.00px;width:224.00px;height:27.00px;background:#fff;border:1px solid #e6e8ec;border-radius:8px;box-shadow:0 1px 2px rgba(0,0,0,.04)"></div>
<span class="t" style="left:932.60px;top:550.00px;font-size:11px;color:#6b6b6b;letter-spacing:0.102px;">September 26th, 2025</span>
<svg class="i" style="left:1119.20px;top:547.80px;width:12px;height:12px;color:#909090;" viewBox="0 0 24 24" stroke-width="1.7"><path d="M8 2v4"/><path d="M16 2v4"/><rect width="18" height="18" x="3" y="4" rx="2"/><path d="M3 10h18"/></svg>
<span class="t" style="left:919.60px;top:586.00px;font-size:11px;color:#4a5260;letter-spacing:0.146px;-webkit-text-stroke:0.22px;">Installment Qty</span>
<span class="t" style="left:1161.60px;top:586.00px;font-size:11px;color:#4a5260;letter-spacing:0.132px;-webkit-text-stroke:0.22px;">Payment Terms</span>
<div class="b" style="left:920.00px;top:602.00px;width:224.00px;height:27.00px;background:#fff;border:1px solid #d6dae4;border-radius:8px"></div>
<span class="t" style="left:929.40px;top:611.00px;font-size:11px;color:#777;">1</span>
<div class="b" style="left:1162.00px;top:602.00px;width:224.00px;height:27.00px;background:#fff;border:1px solid #dde1e8;border-radius:8px"></div>
<span class="t" style="left:1171.60px;top:612.00px;font-size:11px;color:#777;letter-spacing:0.076px;">Net 45</span>
<svg class="i" style="left:1364.25px;top:609.25px;width:11.5px;height:11.5px;color:#a8a8a8;" viewBox="0 0 24 24" stroke-width="1.9"><path d="m6 9 6 6 6-6"/></svg>
</div></body></html>
